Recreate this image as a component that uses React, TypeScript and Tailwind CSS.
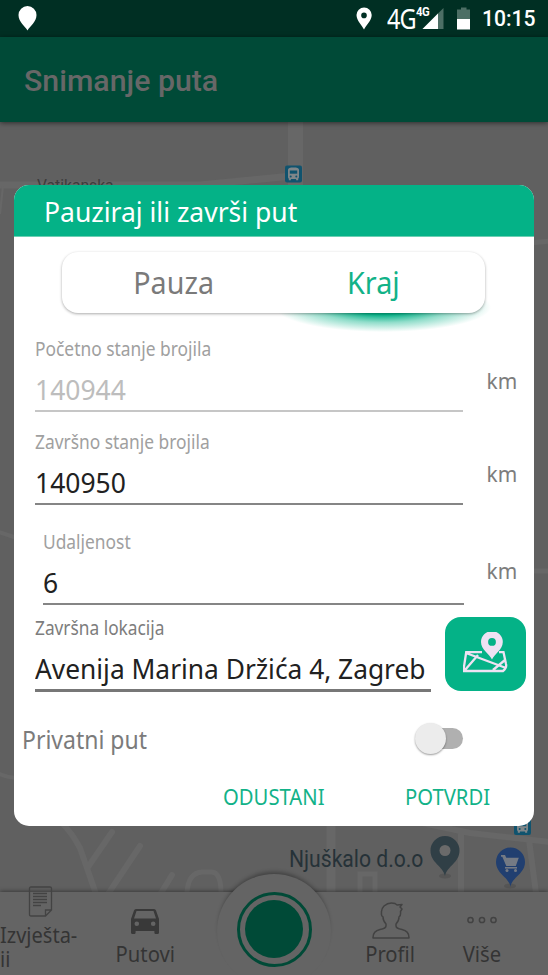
import type { ReactNode } from "react";

const noto = "font-['Noto_Sans','Open_Sans',sans-serif]";
const roboto = "font-['Roboto',sans-serif]";

function BusIcon({ x, y }: { x: number; y: number }) {
  return (
    <g transform={`translate(${x} ${y})`}>
      <rect width="17" height="17" rx="2" fill="#10536e" />
      <path
        d="M3 4.200C3 2.600 5 2 8.500 2s5.500 .6 5.500 2.200v7.600c0 .7-.4 1.100-.8 1.400v1.600h-2.100v-1.200H5.900v1.200H3.800v-1.600c-.5-.3-.8-.7-.8-1.400z"
        fill="#7f8689"
      />
      <rect x="4.800" y="5" width="7.400" height="3.200" fill="#10536e" />
      <circle cx="5.700" cy="11" r="1" fill="#10536e" />
      <circle cx="11.300" cy="11" r="1" fill="#10536e" />
    </g>
  );
}

function MapCanvas() {
  return (
    <svg className="absolute inset-0" width="548" height="770" viewBox="0 122 548 770">
      <rect y="122" width="548" height="770" fill="#606060" />
      <g fill="none" stroke="#676767" strokeWidth="7">
        <path d="M-5 185 H200 L292 176" strokeWidth="7" />
        <path d="M295.500 122 V190" strokeWidth="15" />
        <path d="M0 214 L3 186" strokeWidth="2" />
        <path d="M530 243 L550 241 M530 571 H550" strokeWidth="5" />
        <path d="M-4 531 L20 539 M-4 772 Q6 778 20 778" strokeWidth="4" />
        <path d="M62 823 Q72 833 80 848 L96 894 M88 867 L112 832 M108 894 L140 846 M161 893 L172 875" strokeWidth="6" strokeLinecap="round" />
        <path d="M187 893 Q188 873 202 872 H212 Q221 873 221 893" strokeWidth="5" />
        <path d="M331 824 V893" strokeWidth="9" />
        <path d="M360 893 V874 H375 V893" strokeWidth="5" />
        <path d="M418 822 L470 833 L550 842 M461 832 V893 M529 840 L536 893" strokeWidth="6" />
      </g>
      <BusIcon x={285} y={165.500} />
      <BusIcon x={514} y={818} />
      <ellipse cx="445" cy="876" rx="6" ry="2.500" fill="#555" />
      <path d="M445 876C443 866 430.500 863 430.500 850.500a14.500 14.500 0 0 1 29 0C459.500 863 447 866 445 876z" fill="#303f46" />
      <circle cx="445" cy="850.500" r="5.500" fill="#6a6a6a" />
      <ellipse cx="510" cy="886" rx="6" ry="2.500" fill="#555" />
      <path d="M510.500 887C509 877 496 874 496 862a14.500 14.500 0 0 1 29 0C525 874 512 877 510.500 887z" fill="#213f70" />
      <g fill="#747a84">
        <path d="M501 855h4l1.300 2.800h12.500l-3 8.200h-9.500l-4-9.200H501z" />
        <path d="M505 867h12v1.600h-12z" />
        <circle cx="507" cy="870.500" r="1.500" />
        <circle cx="515.500" cy="870.500" r="1.500" />
      </g>
    </svg>
  );
}

function StatusBar() {
  return (
    <div className={`flex h-[37px] shrink-0 items-center bg-[#002f23] text-white ${roboto}`}>
      <svg width="548" height="37" viewBox="0 0 548 37" className="absolute left-0 top-0" fill="#fff">
        <path d="M27.500 30.500C25 26 18.500 22 18.500 15a9 9 0 0 1 18 0C36.500 22 30 26 27.500 30.500z" />
        <path
          fillRule="evenodd"
          d="M364 29.500C362 25.500 356.500 20.500 356.500 15a7.600 7.600 0 0 1 15.200 0C371.700 20.500 366 25.500 364 29.500zM364 12.600a2.800 2.800 0 1 0 0 5.600a2.800 2.800 0 0 0 0-5.600z"
        />
        <path d="M443.500 8v21H422.500z" fill="#4d6f65" />
        <path d="M438 13.500V29H422.500z" />
        <path d="M457 9.500h4V7.500h5.500v2H470V19h-13z" fill="#4d6f65" />
        <path d="M457 19h13v10.500h-13z" />
      </svg>
      <span className="ml-[387px] w-[29px] origin-left scale-x-[.84] text-[28px] leading-[37px] font-normal tracking-[-1px] font-['Noto_Sans',sans-serif]">4G</span>
      <span className="-mt-[13px] w-[14px] origin-left scale-x-[.94] text-[12px] leading-none font-bold tracking-[-.5px]">4G</span>
      <span className="ml-[52px] origin-left scale-x-[.96] text-[22px] leading-[37px] font-medium">10:15</span>
    </div>
  );
}

type FieldProps = {
  label: string;
  value: string;
  className: string;
  lineClass: string;
  valueClass: string;
  unitClass: string;
};

function Field({ label, value, className, lineClass, valueClass, unitClass }: FieldProps) {
  return (
    <div className={`flex h-[76px] shrink-0 justify-between pr-[17px] ${className}`}>
      <div className={lineClass}>
        <div className="h-[26px] w-max origin-left scale-x-[.914] text-[19px] leading-[27px] whitespace-nowrap text-[#a0a0a0]">{label}</div>
        <div className={`mt-[10px] h-[40px] border-b-2 text-[28px] leading-[34px] ${valueClass}`}>
          <div className="w-max origin-left scale-x-[.945]">{value}</div>
        </div>
      </div>
      <div className={`h-[26px] w-max origin-right scale-x-[.95] text-[22px] leading-[25px] text-[#7d7d7d] ${unitClass}`}>km</div>
    </div>
  );
}

function Dialog() {
  return (
    <div className={`absolute top-[185px] left-[14px] flex h-[641px] w-[520px] flex-col overflow-hidden rounded-[15px] bg-white ${noto}`}>
      <div className="h-[52px] shrink-0 border-b border-[#6ccfb3] bg-[#04b287] pl-[30px] text-[28px] leading-[52px] whitespace-nowrap text-white">
        <div className="w-max origin-left scale-x-[.946]">Pauziraj ili završi put</div>
      </div>
      <div className="relative z-0 mt-[15px] ml-[48px] h-[61px] w-[423px] shrink-0">
        <div className="absolute -bottom-[19px] left-[213px] -z-10 h-[50px] w-[216px] bg-[radial-gradient(ellipse_closest-side,#04b287_0%,#04b287_30%,#04b28770_62%,transparent_100%)]" />
        <div className="flex h-full rounded-[16px] bg-white text-[31px] leading-[60px] shadow-[0_1px_3px_#0005]">
          <div className="flex w-[223px] justify-center text-[#7a7a7a]"><span className="scale-x-[.925]">Pauza</span></div>
          <div className="flex w-[176px] justify-center text-[#12b288]"><span className="scale-x-[.93]">Kraj</span></div>
        </div>
      </div>
      <Field
        label="Početno stanje brojila"
        value="140944"
        className="mt-[23px] ml-[21px]"
        lineClass="w-[428px]"
        valueClass="border-[#c6c6c6] text-[#bdbdbd]"
        unitClass="mt-[32px]"
      />
      <Field
        label="Završno stanje brojila"
        value="140950"
        className="mt-[17px] ml-[21px]"
        lineClass="w-[428px]"
        valueClass="border-[#858585] text-[#212121]"
        unitClass="mt-[32px]"
      />
      <Field
        label="Udaljenost"
        value="6"
        className="mt-[24px] ml-[29px]"
        lineClass="w-[421px]"
        valueClass="border-[#858585] text-[#212121]"
        unitClass="mt-[29px]"
      />
      <div className="mt-[9px] ml-[21px] flex h-[77px] shrink-0">
        <div className="w-[396px]">
          <div className="h-[26px] w-max origin-left scale-x-[.91] text-[19px] leading-[28px] text-[#7d7d7d]">Završna lokacija</div>
          <div className="mt-[10px] h-[42px] border-b-3 border-[#777] text-[28px] leading-[37px] whitespace-nowrap text-[#212121]">
            <div className="w-max origin-left scale-x-[.94]">Avenija Marina Držića 4, Zagreb</div>
          </div>
        </div>
        <button className="mt-[3px] ml-[14px] flex h-[74px] w-[81px] items-center justify-center rounded-[16px] bg-[#04b287]">
          <svg width="46" height="44" viewBox="463 632 46 44" fill="none" stroke="#eee2f3" strokeWidth="2.300">
            <path d="M482 652.200H466.200L463.300 671H503Q507 668 506 664L503.500 652.200H499M465 670L478 655M466 653L506 668M493 670L505 660" />
            <path
              fill="#eee2f3"
              stroke="none"
              fillRule="evenodd"
              d="M492 659.500C489.500 654 481 649.500 481 642a10.900 10.900 0 0 1 21.800 0C502.800 649.500 494.500 654 492 659.500zM492 638a3.900 3.900 0 1 0 0 7.800a3.900 3.900 0 0 0 0-7.800z"
            />
          </svg>
        </button>
      </div>
      <div className="mt-[31px] flex h-[34px] shrink-0 items-center pl-[8px]">
        <div className="w-[393px] text-[25px] leading-[34px] text-[#7b7b7b]"><div className="w-max origin-left scale-x-[.92]">Privatni put</div></div>
        <div className="-mt-[2px] flex h-[32px] w-[49px] items-center">
          <div className="z-10 size-[31px] shrink-0 rounded-full bg-[#ececec] shadow-[0_1px_2px_#0006]" />
          <div className="-ml-[18px] h-[21px] w-[35px] shrink-0 rounded-full bg-[#b0b0b0]" />
        </div>
      </div>
      <div className="mt-[23px] flex h-[34px] shrink-0 pl-[209px] text-[22px] leading-[34px] text-[#12b288]">
        <div className="w-[182px]"><div className="w-max origin-left scale-x-[.92]">ODUSTANI</div></div>
        <div className="w-max origin-left scale-x-[.92]">POTVRDI</div>
      </div>
    </div>
  );
}

function NavItem({ icon, label, className }: { icon: ReactNode; label: string; className: string }) {
  return (
    <div className={`flex flex-col items-center pt-[8px] text-[22px] leading-[26px] ${className}`}>
      <div className="flex h-[40px] items-center">{icon}</div>
      <div className="scale-x-[.92]">{label}</div>
    </div>
  );
}

function BottomNav() {
  return (
    <div className={`relative flex h-[83px] shrink-0 bg-[#646464] text-[#343434] shadow-[0_-1px_4px_#0006] ${noto}`}>
      <div className="w-[98px] text-[22px] leading-[24px]">
        <svg className="-mt-[6px] ml-[28px] block" width="25" height="32" viewBox="0 0 25 32" fill="none" stroke="#434343" strokeWidth="1.300">
          <path d="M3 1h19q1.500 0 1.500 1.500V24l-6 6H3q-1.500 0-1.500-1.500v-26Q1.500 1 3 1zM23.500 24h-6v6M5 7.500h14M5 10.500h14M5 13.500h14M5 16.500h14M5 19.500h8" />
        </svg>
        <div className="mt-[4px] w-max origin-left scale-x-[.91]">Izvješta-<br />ii</div>
      </div>
      <NavItem
        className="w-[94px]"
        label="Putovi"
        icon={
          <svg className="mt-[2px]" width="28" height="25" viewBox="0 0 28 25" fill="#393939">
            <path
              fillRule="evenodd"
              d="M5 0h18q1.500 0 2 1.500L28 10v13.500Q28 25 26.500 25h-1.800Q23.400 25 23.400 23.500V22H4.600v1.500Q4.600 25 3.300 25H1.500Q0 25 0 23.500V10L3 1.500Q3.500 0 5 0zM5.500 2L3 9.500h22L22.500 2zM5.800 12.500a2.300 2.300 0 1 0 0 4.600a2.300 2.300 0 0 0 0-4.600zM22.200 12.500a2.300 2.300 0 1 0 0 4.600a2.300 2.300 0 0 0 0-4.600z"
            />
          </svg>
        }
      />
      <div className="flex w-[164px] justify-center">
        <div className="-mt-[18px] flex size-[114px] shrink-0 items-center justify-center rounded-full bg-[#646464] shadow-[0_-4px_4px_-2px_#0005]">
          <div className="-mt-[4px] flex size-[75px] items-center justify-center rounded-full border-3 border-[#004a37]">
            <div className="size-[58px] rounded-full bg-[#004a37]" />
          </div>
        </div>
      </div>
      <NavItem
        className="w-[69px]"
        label="Profil"
        icon={
          <svg width="38" height="37" viewBox="0 0 38 37" fill="none" stroke="#424242" strokeWidth="1.500" strokeLinejoin="round">
            <path d="M1 36Q.8 29 8 27.500Q14 26.500 14 24V22Q11 19 11 15Q9 14 9.500 11Q9 7 12 4Q17-.5 23 1.500L25 3L30 2.500L28 5L30 7L28.500 9.500Q29 14 27 15Q27 19 24 22V24Q24 26.500 30 27.500Q37.200 29 37 36z" />
          </svg>
        }
      />
      <NavItem
        className="ml-[22px] w-[69px]"
        label="Više"
        icon={
          <svg width="32" height="8" viewBox="0 0 32 8" fill="none" stroke="#424242" strokeWidth="1.500">
            <circle cx="4.500" cy="4" r="2.600" /><circle cx="16" cy="4" r="2.600" /><circle cx="27.500" cy="4" r="2.600" />
          </svg>
        }
      />
    </div>
  );
}

export default function App() {
  return (
    <div className="relative flex h-[975px] w-[548px] flex-col overflow-hidden bg-[#606060]">
      <StatusBar />
      <header className={`z-10 flex h-[85px] shrink-0 items-center bg-[#004a37] pl-[24px] text-[30px] font-medium text-[#676767] shadow-[0_1px_5px_#0008] ${roboto}`}>
        <div className="mt-[2px] w-max origin-left scale-x-[1.01]">Snimanje puta</div>
      </header>
      <main className={`relative flex-1 overflow-hidden ${roboto}`}>
        <MapCanvas />
        <div className="absolute top-[53px] left-[37px] origin-left scale-x-[.92] text-[17px] leading-[20px] text-[#3c3c3c]">Vatikanska</div>
        <div className="absolute top-[722px] left-[289px] origin-left scale-x-[.88] text-[24px] leading-[30px] whitespace-nowrap text-[#263238]">Njuškalo d.o.o</div>
      </main>
      <BottomNav />
      <Dialog />
    </div>
  );
}
